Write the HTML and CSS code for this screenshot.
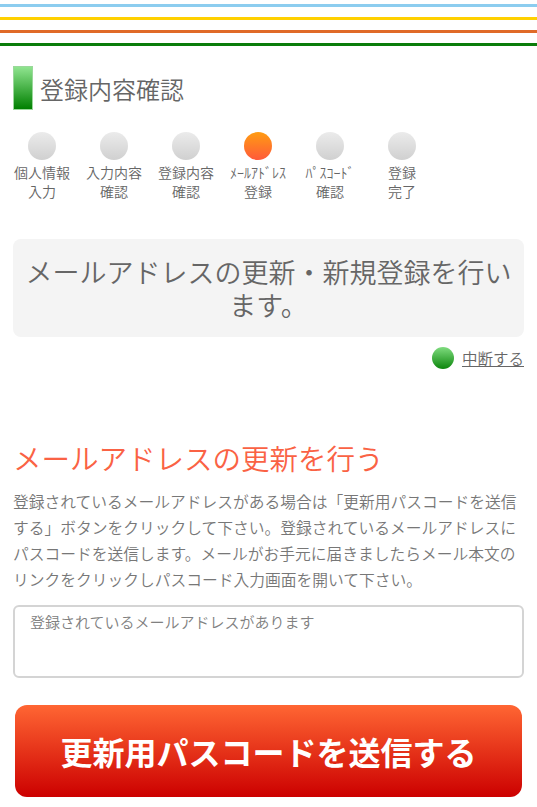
FILE: index.html
```html
<!DOCTYPE html>
<html lang="ja">
<head>
  <meta charset="UTF-8" />
  <meta name="viewport" content="width=device-width, initial-scale=1.0"/>
  <title>登録内容確認</title>
  <link rel="stylesheet" href="styles.css">
</head>
<body>

  <div class="stripes">
    <div class="stripe blue"></div>
    <div class="stripe yellow"></div>
    <div class="stripe orange"></div>
    <div class="stripe green"></div>
  </div>

  <main class="page">
    <h1 class="page-title"><span class="title-bar"></span>登録内容確認</h1>

    <ol class="steps">
      <li class="step"><span class="step-dot"></span><span class="step-label">個人情報<br>入力</span></li>
      <li class="step"><span class="step-dot"></span><span class="step-label">入力内容<br>確認</span></li>
      <li class="step"><span class="step-dot"></span><span class="step-label">登録内容<br>確認</span></li>
      <li class="step current"><span class="step-dot"></span><span class="step-label">ﾒｰﾙｱﾄﾞﾚｽ<br>登録</span></li>
      <li class="step"><span class="step-dot"></span><span class="step-label">ﾊﾟｽｺｰﾄﾞ<br>確認</span></li>
      <li class="step"><span class="step-dot"></span><span class="step-label">登録<br>完了</span></li>
    </ol>

    <div class="notice">メールアドレスの更新・新規登録を行います。</div>

    <div class="cancel">
      <a href="#" class="cancel-link"><span class="cancel-dot"></span><span class="cancel-text">中断する</span></a>
    </div>

    <h2 class="section-title">メールアドレスの更新を行う</h2>
    <p class="section-text">登録されているメールアドレスがある場合は「更新用パスコードを送信する」ボタンをクリックして下さい。登録されているメールアドレスにパスコードを送信します。メールがお手元に届きましたらメール本文のリンクをクリックしパスコード入力画面を開いて下さい。</p>

    <textarea class="mail-box" placeholder="登録されているメールアドレスがあります"></textarea>

    <button class="send-btn">更新用パスコードを送信する</button>
  </main>

</body>
</html>
```

FILE: styles.css
```css
body { margin: 0; padding: 0; background: #fff; font-family: "Noto Sans CJK JP", "Noto Sans", sans-serif; font-weight: 350; color: #666; }

.stripes { padding-top: 4px; }
.stripe { height: 3px; margin-bottom: 10px; }
.stripe:last-child { margin-bottom: 0; }
.blue { background: #8ccdef; }
.yellow { background: #ffd000; }
.orange { background: #e06a28; }
.green { background: #0b7d0b; }

.page { padding: 0 13px; }

.page-title { display: flex; align-items: center; gap: 7px; margin: 20px 0 0; height: 44px; font-size: 24px; font-weight: 350; color: #666; }
.title-bar { width: 20px; height: 44px; background: linear-gradient(#8fe48f, #008000); box-sizing: border-box; border: 1px solid #9ad89a; }

.steps { display: flex; list-style: none; margin: 22px 0 0 -7px; padding: 0; }
.step { width: 72px; display: flex; flex-direction: column; align-items: center; }
.step-dot { width: 28px; height: 28px; border-radius: 50%; background: linear-gradient(#ebebeb, #d0d0d0); }
.current .step-dot { background: linear-gradient(#ff9c12, #ff5a3a); }
.step-label { margin-top: 3px; font-size: 14px; line-height: 19px; text-align: center; color: #666; }

.notice { margin-top: 38px; padding: 16px 8px; background: #f4f4f4; border-radius: 8px; font-size: 27px; line-height: 33px; text-align: center; color: #666; }

.cancel { display: flex; justify-content: flex-end; margin-top: 10px; }
.cancel-link { display: flex; align-items: center; gap: 8px; color: #666; text-decoration: none; }
.cancel-dot { width: 22px; height: 22px; border-radius: 50%; background: linear-gradient(#7fdc7f, #0c860c); }
.cancel-text { font-size: 15.5px; line-height: 22px; text-decoration: underline; }

.section-title { margin: 69px 0 0; font-size: 28.5px; line-height: 40px; font-weight: 350; color: #fa6244; }
.section-text { margin: 11px 0 0; font-size: 15.75px; line-height: 26px; color: #777; }

.mail-box { display: block; width: 100%; height: 73px; margin-top: 12px; padding: 4px 15px; box-sizing: border-box; border: 2px solid #d4d4d4; border-radius: 6px; font-family: inherit; font-weight: 350; font-size: 15px; line-height: 22px; color: #666; resize: none; }
.mail-box::placeholder { color: #808080; }

.send-btn { display: block; width: calc(100% - 4px); height: 92px; margin: 27px 2px 0; border: none; border-radius: 12px; background: linear-gradient(#ff6633, #cc0000); color: #fff; font-family: inherit; font-size: 32px; font-weight: bold; cursor: pointer; }
```
